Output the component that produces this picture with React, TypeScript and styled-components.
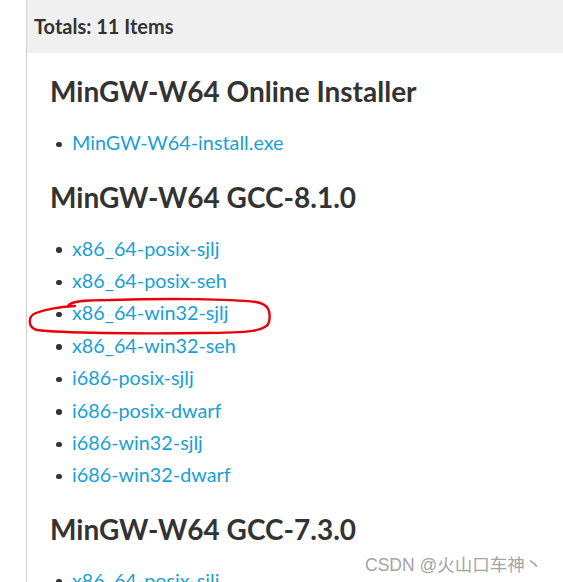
import React from "react";
import styled, { createGlobalStyle } from "styled-components";

const Global = createGlobalStyle`
  html, body { margin: 0; padding: 0; background: #fff; overflow: hidden; }
  body { font-family: Lato, "Liberation Sans", sans-serif; }
`;

const Page = styled.div`
  position: relative;
  width: 563px;
  height: 582px;
  overflow: hidden;
  background: #fff;
`;

const Panel = styled.div`
  margin-left: 26px;
  border-left: 1px solid #cfcfcf;
  min-height: 700px;
`;

const Header = styled.div`
  height: 53px;
  background: #f0f0f0;
  display: flex;
  align-items: center;
  padding-left: 7px;
  padding-bottom: 1px;
  box-sizing: border-box;
  font-weight: 700;
  font-size: 20px;
  color: #333;
`;

const Body = styled.div`
  padding: 0 0 0 23px;
  display: flow-root;
`;

const Heading = styled.h2`
  margin: 22px 0 17.5px;
  font-size: 28px;
  line-height: 33.6px;
  font-weight: 700;
  color: #333;
`;

const List = styled.ul`
  list-style: none;
  margin: 0;
  padding: 0;
`;

const Item = styled.li`
  position: relative;
  padding-left: 22px;
  font-size: 19.8px;
  line-height: 32.4px;
  &::before {
    content: "";
    position: absolute;
    left: 6px;
    top: 15.5px;
    width: 5.5px;
    height: 5.5px;
    border-radius: 50%;
    background: #333;
  }
`;

const Link = styled.a`
  color: #1a9fd5;
  text-decoration: none;
`;

const Mark = styled.svg`
  position: absolute;
  left: 0;
  top: 0;
  pointer-events: none;
`;

const Watermark = styled.div`
  position: absolute;
  left: 365px;
  top: 551px;
  font-family: "Liberation Sans", "Noto Sans CJK SC", sans-serif;
  font-size: 17.5px;
  color: #a3a3a3;
  white-space: nowrap;
  text-shadow: 0 0 2px #fff;
`;

const sections = [
  { title: "MinGW-W64 Online Installer", items: ["MinGW-W64-install.exe"] },
  {
    title: "MinGW-W64 GCC-8.1.0",
    items: [
      "x86_64-posix-sjlj",
      "x86_64-posix-seh",
      "x86_64-win32-sjlj",
      "x86_64-win32-seh",
      "i686-posix-sjlj",
      "i686-posix-dwarf",
      "i686-win32-sjlj",
      "i686-win32-dwarf",
    ],
  },
  { title: "MinGW-W64 GCC-7.3.0", items: ["x86_64-posix-sjlj", "x86_64-posix-seh"] },
];

export default function App() {
  return (
    <Page>
      <Global />
      <Panel>
        <Header>Totals: 11 Items</Header>
        <Body>
          {sections.map((s) => (
            <React.Fragment key={s.title}>
              <Heading>{s.title}</Heading>
              <List>
                {s.items.map((it, i) => (
                  <Item key={i}>
                    <Link href="#">{it}</Link>
                  </Item>
                ))}
              </List>
            </React.Fragment>
          ))}
        </Body>
      </Panel>
      <Mark width="563" height="582" viewBox="0 0 563 582">
        <path
          d="M 68 306 C 70 302, 80 300, 110 300 C 170 298, 230 299, 256 302 C 269 304, 271 312, 269 322 C 267 331, 250 333, 200 333 C 140 334, 60 333, 37 330 C 27 327, 28 316, 36 313 C 46 309, 60 307, 75 306"
          fill="none"
          stroke="#e8000b"
          strokeWidth="2.4"
          strokeLinecap="round"
        />
      </Mark>
      <Watermark>CSDN @火山口车神丶</Watermark>
    </Page>
  );
}
